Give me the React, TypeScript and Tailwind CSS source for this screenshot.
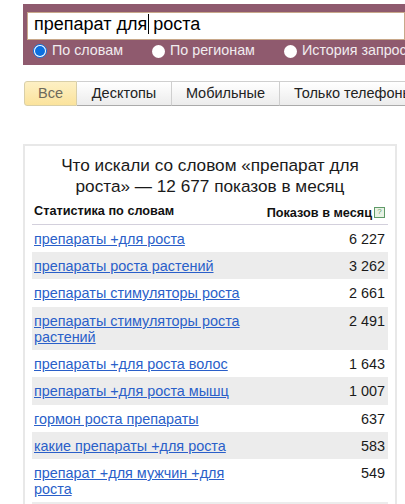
const rows: { q: string[]; n: string; shade?: boolean; h: string }[] = [
  { q: ["препараты +для роста"], n: "6 227", h: "h-[27px]" },
  { q: ["препараты роста растений"], n: "3 262", shade: true, h: "h-[27px]" },
  { q: ["препараты стимуляторы роста"], n: "2 661", h: "h-[28px]" },
  { q: ["препараты стимуляторы роста", "растений"], n: "2 491", shade: true, h: "h-[43px]" },
  { q: ["препараты +для роста волос"], n: "1 643", h: "h-[27px]" },
  { q: ["препараты +для роста мышц"], n: "1 007", shade: true, h: "h-[28px]" },
  { q: ["гормон роста препараты"], n: "637", h: "h-[27px]" },
  { q: ["какие препараты +для роста"], n: "583", shade: true, h: "h-[27px]" },
  { q: ["препарат +для мужчин +для", "роста"], n: "549", h: "h-[43px]" },
]

function Radio({ checked, label, className }: { checked?: boolean; label: string; className: string }) {
  return (
    <div className={`flex shrink-0 items-center whitespace-nowrap ${className}`}>
      {checked ? (
        <span className="flex h-[14px] w-[14px] items-center justify-center rounded-full border border-[#0a6fe0] bg-white">
          <span className="h-[10px] w-[10px] rounded-full bg-[#0a6fe0]" />
        </span>
      ) : (
        <span className="mx-[0.5px] h-[13px] w-[13px] rounded-full bg-white" />
      )}
      <span className="ml-[5px]">{label}</span>
    </div>
  )
}

const tabs = [
  { label: "Десктопы", w: "w-[95px]" },
  { label: "Мобильные", w: "w-[108px]" },
  { label: "Только телефоны", w: "w-[148px]" },
]

export default function App() {
  return (
    <div className="h-[504px] w-[405px] overflow-hidden bg-white pt-1 font-['Liberation_Sans',Arial,sans-serif] text-[14px] text-black">
      {/* search bar */}
      <div className="ml-[23px] h-[61px] overflow-hidden bg-[#8f5a6e] pl-[4px] pt-[8px]">
        <div className="flex h-[28px] items-center border border-[#c8a88a] bg-white pb-[4px] pl-[6px] text-[18px] whitespace-nowrap">
          <span>препарат для</span>
          <span className="mx-[0.5px] h-[20px] w-px bg-black" />
          <span className="ml-[4px]">роста</span>
        </div>
        <div className="mt-[2px] flex h-[18px] items-center text-[14.3px] text-[#f1ecee]">
          <Radio checked label="По словам" className="ml-[6px] w-[118px]" />
          <Radio label="По регионам" className="w-[132px]" />
          <Radio label="История запросов" className="w-[140px]" />
        </div>
      </div>

      {/* tabs */}
      <div className="mt-[16px] ml-[24px] flex h-[25px] w-[381px] overflow-hidden">
        <div className="flex w-[53px] shrink-0 items-center justify-center rounded-l-[3px] border border-[#d9cfa8] bg-gradient-to-b from-[#fdf0c4] to-[#fbe39c] text-[14.5px] text-[#6e6a5c]">
          Все
        </div>
        {tabs.map((t) => (
          <div
            key={t.label}
            className={`flex ${t.w} shrink-0 items-center justify-center border border-l-0 border-[#cfcfcf] border-b-[#aaaaaa] bg-gradient-to-b from-white to-[#ececec] text-[14.5px] whitespace-nowrap text-[#222222]`}
          >
            {t.label}
          </div>
        ))}
      </div>

      {/* stats panel */}
      <div className="mt-[38px] ml-[23px] w-[374px] border-2 border-b-0 border-[#e8e8e8] px-[7px] pt-[9px]">
        <h2 className="mx-auto w-[325px] text-center text-[17.2px] leading-[21px] font-normal text-[#1a1a1a]">
          Что искали со словом «препарат для роста» — 12 677 показов в месяц
        </h2>
        <div className="mt-[2px] flex h-[26px] items-center justify-between border-b border-[#d3d0dc] pl-[2px] pt-[1px] text-[12.7px] font-bold text-[#111111]">
          <span>Статистика по словам</span>
          <span className="mt-[4px] mr-[3px] flex items-center">
            Показов в месяц
            <span className="mb-[3px] ml-[2px] flex h-[11px] w-[11px] items-center justify-center border border-[#5f9a68] bg-[#e8f2e4] text-[8px] leading-none font-normal text-[#5f9a68]">
              ?
            </span>
          </span>
        </div>
        {rows.map((r) => (
          <div key={r.n} className={`flex justify-between pt-[6px] pr-[3px] pl-[2px] text-[14.4px] leading-[16px] ${r.h} ${r.shade ? "bg-[#ececec]" : "bg-white"}`}>
            <a href="#" className="text-[#2a5fc9] underline">
              {r.q.map((line) => (
                <span key={line} className="block whitespace-nowrap">{line}</span>
              ))}
            </a>
            <span className="text-[#1a1a1a]">{r.n}</span>
          </div>
        ))}
        <div className="h-[2px] bg-[#ececec]" />
      </div>
    </div>
  )
}
